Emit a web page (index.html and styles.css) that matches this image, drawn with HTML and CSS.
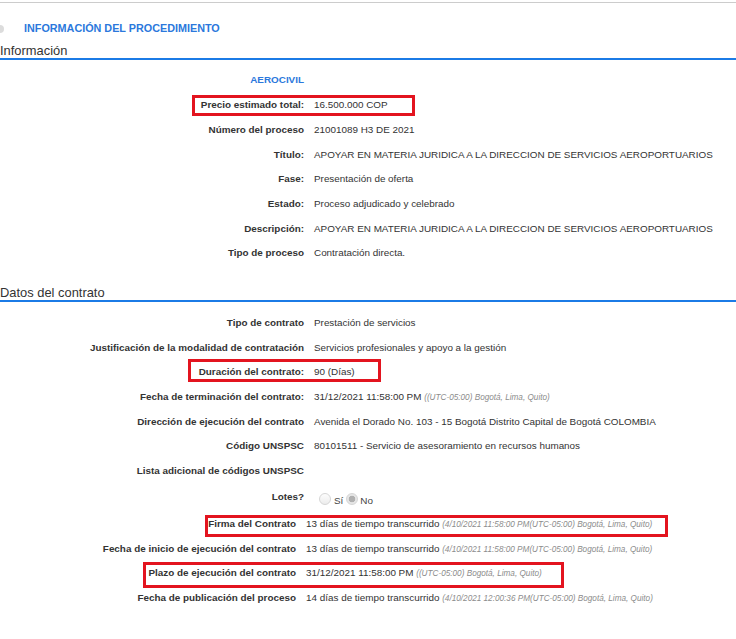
FILE: index.html
```html
<!DOCTYPE html>
<html lang="es">

<head>
    <meta charset="UTF-8">
    <meta name="viewport" content="width=device-width, initial-scale=1.0">
    <title>Información del procedimiento</title>
    <link rel="stylesheet" href="styles.css">
</head>

<body>
    <div class="page">
        <div class="topbar"></div>

        <div class="proc-title">
            <svg class="toggle" width="5" height="10" viewBox="0 0 5 10"><circle cx="0" cy="5" r="4" fill="#dcdcdc"/></svg>
            INFORMACIÓN DEL PROCEDIMIENTO
        </div>

        <h2 class="section-title first">Información</h2>
        <div class="fields">
            <div class="field"><div class="label entity">AEROCIVIL</div><div class="value"></div></div>
            <div class="field"><div class="label">Precio estimado total:</div><div class="value">16.500.000 COP</div></div>
            <div class="field"><div class="label">Número del proceso</div><div class="value">21001089 H3 DE 2021</div></div>
            <div class="field"><div class="label">Título:</div><div class="value">APOYAR EN MATERIA JURIDICA A LA DIRECCION DE SERVICIOS AEROPORTUARIOS</div></div>
            <div class="field"><div class="label">Fase:</div><div class="value">Presentación de oferta</div></div>
            <div class="field"><div class="label">Estado:</div><div class="value">Proceso adjudicado y celebrado</div></div>
            <div class="field"><div class="label">Descripción:</div><div class="value">APOYAR EN MATERIA JURIDICA A LA DIRECCION DE SERVICIOS AEROPORTUARIOS</div></div>
            <div class="field"><div class="label">Tipo de proceso</div><div class="value">Contratación directa.</div></div>
        </div>

        <h2 class="section-title">Datos del contrato</h2>
        <div class="fields">
            <div class="field"><div class="label">Tipo de contrato</div><div class="value">Prestación de servicios</div></div>
            <div class="field"><div class="label">Justificación de la modalidad de contratación</div><div class="value">Servicios profesionales y apoyo a la gestión</div></div>
            <div class="field"><div class="label">Duración del contrato:</div><div class="value">90 (Días)</div></div>
            <div class="field"><div class="label">Fecha de terminación del contrato:</div><div class="value">31/12/2021 11:58:00 PM <span class="tz">((UTC-05:00) Bogotá, Lima, Quito)</span></div></div>
            <div class="field"><div class="label">Dirección de ejecución del contrato</div><div class="value">Avenida el Dorado No. 103 - 15 Bogotá Distrito Capital de Bogotá COLOMBIA</div></div>
            <div class="field"><div class="label">Código UNSPSC</div><div class="value">80101511 - Servicio de asesoramiento en recursos humanos</div></div>
            <div class="field"><div class="label">Lista adicional de códigos UNSPSC</div><div class="value"></div></div>
            <div class="field lotes">
                <div class="label">Lotes?</div>
                <div class="value"><span class="radio"></span><span class="opt">Sí</span><span class="radio checked"></span><span class="opt">No</span></div>
            </div>
        </div>
        <div class="fields dates">
            <div class="field"><div class="label">Firma del Contrato</div><div class="value">13 días de tiempo transcurrido <span class="tz">(4/10/2021 11:58:00 PM(UTC-05:00) Bogotá, Lima, Quito)</span></div></div>
            <div class="field"><div class="label">Fecha de inicio de ejecución del contrato</div><div class="value">13 días de tiempo transcurrido <span class="tz">(4/10/2021 11:58:00 PM(UTC-05:00) Bogotá, Lima, Quito)</span></div></div>
            <div class="field"><div class="label">Plazo de ejecución del contrato</div><div class="value">31/12/2021 11:58:00 PM <span class="tz">((UTC-05:00) Bogotá, Lima, Quito)</span></div></div>
            <div class="field"><div class="label">Fecha de publicación del proceso</div><div class="value">14 días de tiempo transcurrido <span class="tz">(4/10/2021 12:00:36 PM(UTC-05:00) Bogotá, Lima, Quito)</span></div></div>
        </div>

        <!-- red highlight marks drawn over the page -->
        <div class="mark mark-precio"></div>
        <div class="mark mark-duracion"></div>
        <div class="mark mark-firma"></div>
        <div class="mark mark-plazo"></div>
    </div>
</body>

</html>
```

FILE: styles.css
```css
body {
    margin: 0;
    font-family: "Liberation Sans", Arial, sans-serif;
    font-size: 9.9px;
    color: #333;
    background: #fff;
}

.page {
    position: relative;
    height: 639px;
    overflow: hidden;
}

.topbar {
    margin-top: 2px;
    border-top: 1px solid #cccccc;
}

.proc-title {
    margin-top: 18px;
    line-height: 14px;
    padding-left: 24px;
    position: relative;
    font-size: 10.8px;
    font-weight: bold;
    color: #2b78dc;
}

.toggle {
    position: absolute;
    left: 0;
    top: 3px;
}

.section-title {
    margin: 20px 0 0;
    font-size: 12.9px;
    font-weight: normal;
    line-height: 15px;
    color: #333;
    border-bottom: 2px solid #1b7be6;
}

.section-title.first {
    margin-top: 7.6px;
}

.fields {
    padding-top: 8px;
}

.dates {
    padding-top: 0;
}

.field {
    display: grid;
    grid-template-columns: 304px 1fr;
    column-gap: 10px;
    align-items: center;
    height: 24.7px;
}

.dates .field {
    grid-template-columns: 296px 1fr;
}

.label {
    text-align: right;
    font-weight: bold;
    white-space: nowrap;
}

.label.entity {
    color: #2b78dc;
}

.value {
    white-space: nowrap;
}

.tz {
    font-style: italic;
    font-size: 8.2px;
    color: #8c8c8c;
}

.field.lotes {
    height: 28.3px;
    align-items: start;
}

.lotes .label {
    padding-top: 8.5px;
}

.lotes .value {
    padding-top: 10px;
    color: #444;
}

.radio {
    display: inline-block;
    box-sizing: border-box;
    width: 12px;
    height: 12px;
    margin: 0 3px 0 5px;
    border: 1px solid #d6d6d6;
    border-radius: 50%;
    background: linear-gradient(#fdfdfd, #ececec);
    vertical-align: -1px;
}

.radio.checked {
    margin-left: 3px;
    margin-right: 2px;
    background: radial-gradient(circle, #b0b0b0 0 3px, #e6e6e6 3.6px);
}

.mark {
    position: absolute;
    box-sizing: border-box;
    border: 3px solid #e3141f;
}

.mark-precio {
    left: 192px;
    top: 95px;
    width: 223px;
    height: 21px;
}

.mark-duracion {
    left: 188px;
    top: 359px;
    width: 193px;
    height: 23px;
}

.mark-firma {
    left: 205px;
    top: 515px;
    width: 463px;
    height: 22px;
}

.mark-plazo {
    left: 143px;
    top: 562px;
    width: 421px;
    height: 26px;
}
```
